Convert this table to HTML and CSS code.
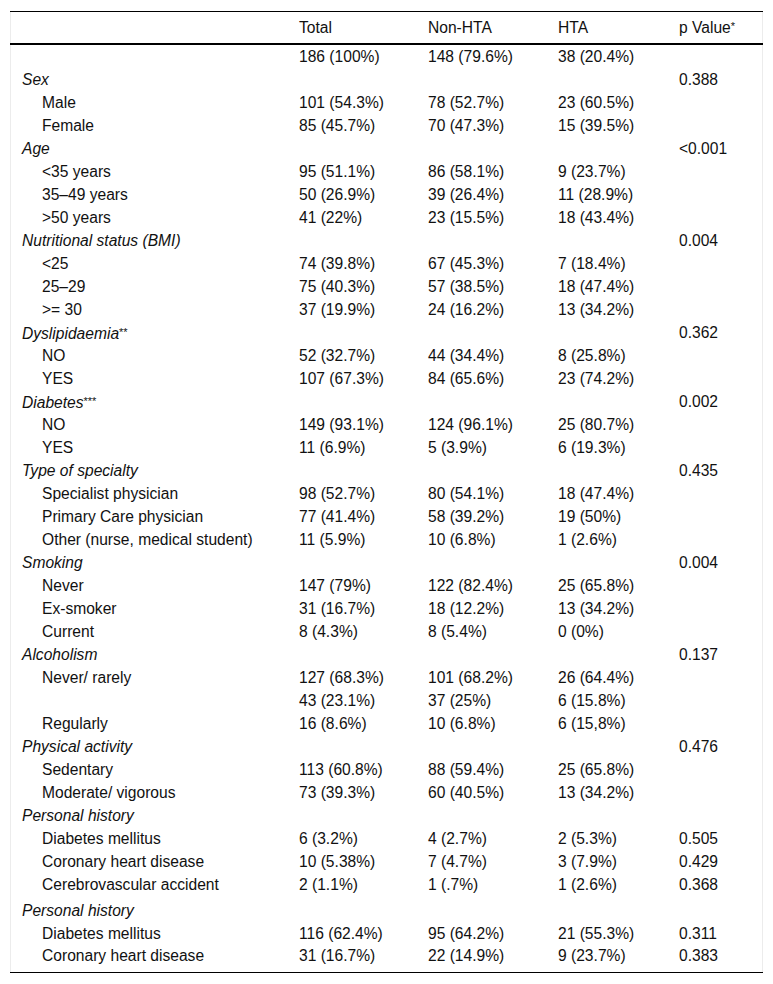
FILE: index.html
```html
<!DOCTYPE html>
<html>
<head>
<meta charset="utf-8">
<link rel="stylesheet" href="styles.css">
</head>
<body>
<div class="wrap">
<table class="tbl">
<colgroup>
<col class="c1"><col class="c2"><col class="c3"><col class="c4"><col class="c5">
</colgroup>
<thead>
<tr><th></th><th>Total</th><th>Non-HTA</th><th>HTA</th><th>p Value<span class="up">*</span></th></tr>
</thead>
<tbody>
<tr><td></td><td>186 (100%)</td><td>148 (79.6%)</td><td>38 (20.4%)</td><td></td></tr>
<tr class="cat"><td>Sex</td><td></td><td></td><td></td><td>0.388</td></tr>
<tr class="sub"><td>Male</td><td>101 (54.3%)</td><td>78 (52.7%)</td><td>23 (60.5%)</td><td></td></tr>
<tr class="sub"><td>Female</td><td>85 (45.7%)</td><td>70 (47.3%)</td><td>15 (39.5%)</td><td></td></tr>
<tr class="cat"><td>Age</td><td></td><td></td><td></td><td>&lt;0.001</td></tr>
<tr class="sub"><td>&lt;35 years</td><td>95 (51.1%)</td><td>86 (58.1%)</td><td>9 (23.7%)</td><td></td></tr>
<tr class="sub"><td>35–49 years</td><td>50 (26.9%)</td><td>39 (26.4%)</td><td>11 (28.9%)</td><td></td></tr>
<tr class="sub"><td>&gt;50 years</td><td>41 (22%)</td><td>23 (15.5%)</td><td>18 (43.4%)</td><td></td></tr>
<tr class="cat"><td>Nutritional status (BMI)</td><td></td><td></td><td></td><td>0.004</td></tr>
<tr class="sub"><td>&lt;25</td><td>74 (39.8%)</td><td>67 (45.3%)</td><td>7 (18.4%)</td><td></td></tr>
<tr class="sub"><td>25–29</td><td>75 (40.3%)</td><td>57 (38.5%)</td><td>18 (47.4%)</td><td></td></tr>
<tr class="sub"><td>&gt;= 30</td><td>37 (19.9%)</td><td>24 (16.2%)</td><td>13 (34.2%)</td><td></td></tr>
<tr class="cat"><td>Dyslipidaemia<span class="up">**</span></td><td></td><td></td><td></td><td>0.362</td></tr>
<tr class="sub"><td>NO</td><td>52 (32.7%)</td><td>44 (34.4%)</td><td>8 (25.8%)</td><td></td></tr>
<tr class="sub"><td>YES</td><td>107 (67.3%)</td><td>84 (65.6%)</td><td>23 (74.2%)</td><td></td></tr>
<tr class="cat"><td>Diabetes<span class="up">***</span></td><td></td><td></td><td></td><td>0.002</td></tr>
<tr class="sub"><td>NO</td><td>149 (93.1%)</td><td>124 (96.1%)</td><td>25 (80.7%)</td><td></td></tr>
<tr class="sub"><td>YES</td><td>11 (6.9%)</td><td>5 (3.9%)</td><td>6 (19.3%)</td><td></td></tr>
<tr class="cat"><td>Type of specialty</td><td></td><td></td><td></td><td>0.435</td></tr>
<tr class="sub"><td>Specialist physician</td><td>98 (52.7%)</td><td>80 (54.1%)</td><td>18 (47.4%)</td><td></td></tr>
<tr class="sub"><td>Primary Care physician</td><td>77 (41.4%)</td><td>58 (39.2%)</td><td>19 (50%)</td><td></td></tr>
<tr class="sub"><td>Other (nurse, medical student)</td><td>11 (5.9%)</td><td>10 (6.8%)</td><td>1 (2.6%)</td><td></td></tr>
<tr class="cat"><td>Smoking</td><td></td><td></td><td></td><td>0.004</td></tr>
<tr class="sub"><td>Never</td><td>147 (79%)</td><td>122 (82.4%)</td><td>25 (65.8%)</td><td></td></tr>
<tr class="sub"><td>Ex-smoker</td><td>31 (16.7%)</td><td>18 (12.2%)</td><td>13 (34.2%)</td><td></td></tr>
<tr class="sub"><td>Current</td><td>8 (4.3%)</td><td>8 (5.4%)</td><td>0 (0%)</td><td></td></tr>
<tr class="cat"><td>Alcoholism</td><td></td><td></td><td></td><td>0.137</td></tr>
<tr class="sub"><td>Never/ rarely</td><td>127 (68.3%)</td><td>101 (68.2%)</td><td>26 (64.4%)</td><td></td></tr>
<tr class="sub"><td></td><td>43 (23.1%)</td><td>37 (25%)</td><td>6 (15.8%)</td><td></td></tr>
<tr class="sub"><td>Regularly</td><td>16 (8.6%)</td><td>10 (6.8%)</td><td>6 (15,8%)</td><td></td></tr>
<tr class="cat"><td>Physical activity</td><td></td><td></td><td></td><td>0.476</td></tr>
<tr class="sub"><td>Sedentary</td><td>113 (60.8%)</td><td>88 (59.4%)</td><td>25 (65.8%)</td><td></td></tr>
<tr class="sub"><td>Moderate/ vigorous</td><td>73 (39.3%)</td><td>60 (40.5%)</td><td>13 (34.2%)</td><td></td></tr>
<tr class="cat"><td>Personal history</td><td></td><td></td><td></td><td></td></tr>
<tr class="sub"><td>Diabetes mellitus</td><td>6 (3.2%)</td><td>4 (2.7%)</td><td>2 (5.3%)</td><td>0.505</td></tr>
<tr class="sub"><td>Coronary heart disease</td><td>10 (5.38%)</td><td>7 (4.7%)</td><td>3 (7.9%)</td><td>0.429</td></tr>
<tr class="sub"><td>Cerebrovascular accident</td><td>2 (1.1%)</td><td>1 (.7%)</td><td>1 (2.6%)</td><td>0.368</td></tr>
<tr class="cat gap"><td>Personal history</td><td></td><td></td><td></td><td></td></tr>
<tr class="sub"><td>Diabetes mellitus</td><td>116 (62.4%)</td><td>95 (64.2%)</td><td>21 (55.3%)</td><td>0.311</td></tr>
<tr class="sub last"><td>Coronary heart disease</td><td>31 (16.7%)</td><td>22 (14.9%)</td><td>9 (23.7%)</td><td>0.383</td></tr>
</tbody>
</table>
</div>
</body>
</html>
```
FILE: styles.css
```css
html, body {
  margin: 0;
  padding: 0;
  background: #fff;
}
body {
  padding: 11px 10px;
  font-family: "Liberation Sans", Arial, sans-serif;
  font-size: 15.6px;
  color: #111;
}
.wrap {
  width: 753px;
  box-shadow: inset 1px 0 0 #ececec, inset -1px 0 0 #ececec;
}
.tbl {
  width: 753px;
  table-layout: fixed;
  border-collapse: collapse;
  border-top: 1px solid #000;
  border-bottom: 1px solid #000;
}
.c1 { width: 277px; }
.c2 { width: 129px; }
.c3 { width: 130px; }
.c4 { width: 121px; }
.c5 { width: 96px; }
.tbl th {
  font-weight: normal;
  text-align: left;
  height: 31px;
  padding: 0 0 0 12px;
  vertical-align: middle;
  border-bottom: 2px solid #000;
}
.tbl td {
  height: 23px;
  padding: 0 0 0 12px;
  vertical-align: middle;
  line-height: 18px;
  white-space: nowrap;
}
.tbl tr.cat td:first-child {
  font-style: italic;
}
.tbl tr.sub td:first-child {
  padding-left: 32px;
}
.tbl tr.gap td {
  height: 26px;
  padding-top: 3px;
  box-sizing: border-box;
}
.tbl tr.last td {
  height: 27px;
  padding-bottom: 4px;
  box-sizing: border-box;
}
.up {
  font-style: normal;
  font-size: 11px;
  vertical-align: 3px;
}
```
